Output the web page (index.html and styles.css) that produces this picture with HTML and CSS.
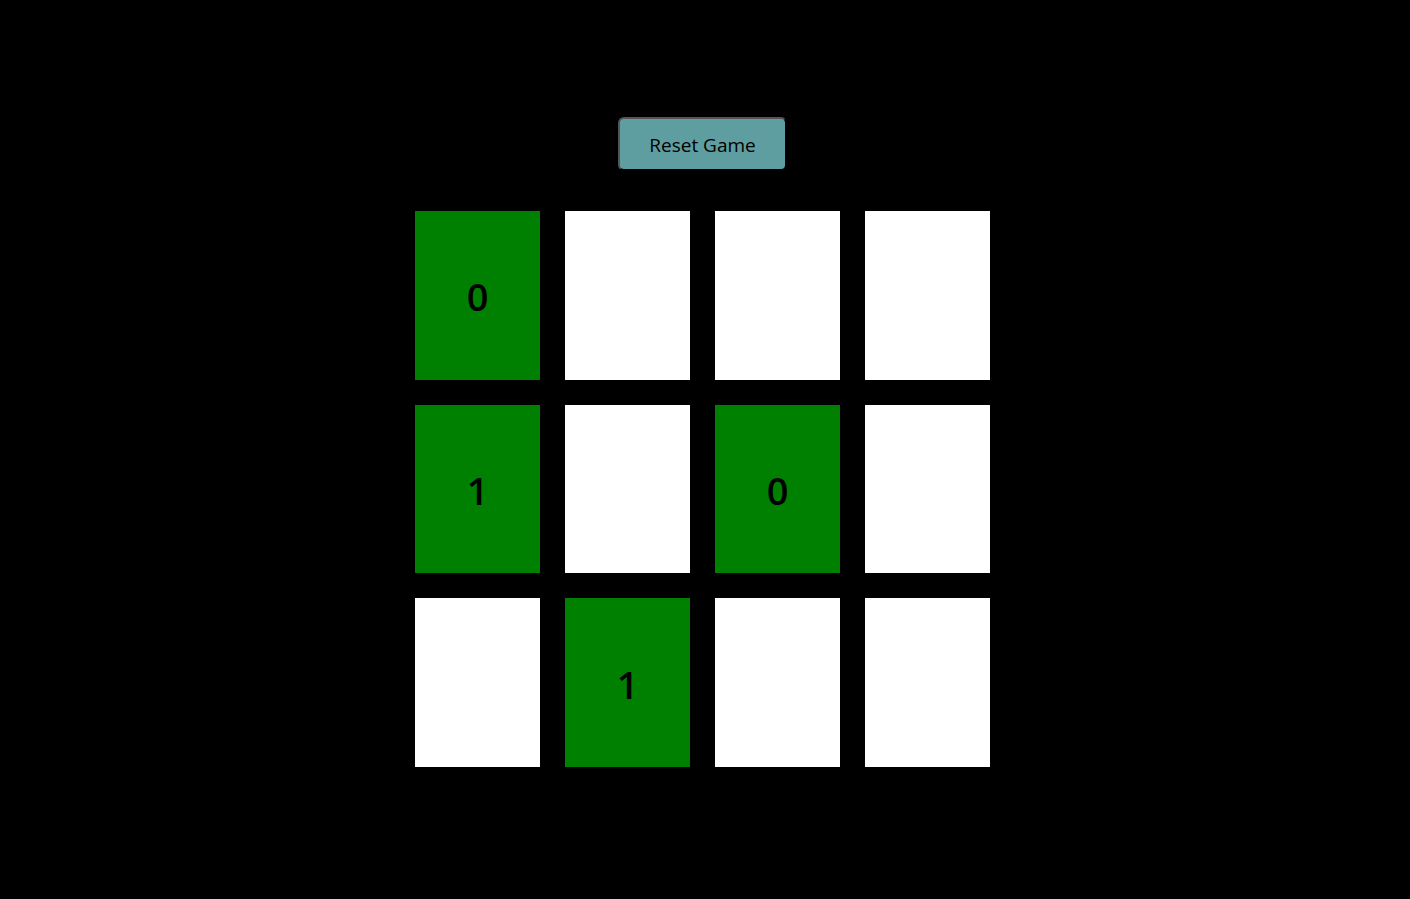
FILE: index.html
```html
<!DOCTYPE html>
<html lang="en">
<head>
<meta charset="utf-8">
<title>Memory Game</title>
<link rel="stylesheet" href="styles.css">
</head>
<body>
<main class="game">
  <button class="reset" type="button">Reset Game</button>
  <div class="board">
    <div class="card open">0</div>
    <div class="card"></div>
    <div class="card"></div>
    <div class="card"></div>
    <div class="card open">1</div>
    <div class="card"></div>
    <div class="card open">0</div>
    <div class="card"></div>
    <div class="card"></div>
    <div class="card open">1</div>
    <div class="card"></div>
    <div class="card"></div>
  </div>
</main>
</body>
</html>
```
FILE: styles.css
```css
* {
  box-sizing: border-box;
}

body {
  margin: 0;
  min-height: 100vh;
  background: #000;
  color: #000;
  font-family: "Open Sans", "Noto Sans", sans-serif;
}

.game {
  display: flex;
  flex-direction: column;
  align-items: center;
  gap: 40px;
  padding: 117px 5px 0 0;
}

.reset {
  padding: 11px 29px 9px;
  border: 2px outset #000;
  border-radius: 6px;
  background: cadetblue;
  color: #000;
  font-family: inherit;
  font-size: 19px;
  font-weight: 400;
  line-height: 30px;
}

.board {
  display: grid;
  grid-template-columns: repeat(4, 125px);
  grid-auto-rows: 1fr;
  gap: 25px;
  min-height: 556px;
}

.card {
  display: flex;
  align-items: center;
  justify-content: center;
  padding-top: 2px;
  background: #fff;
  font-size: 38px;
  font-weight: 600;
}

.open {
  background: green;
}
```
